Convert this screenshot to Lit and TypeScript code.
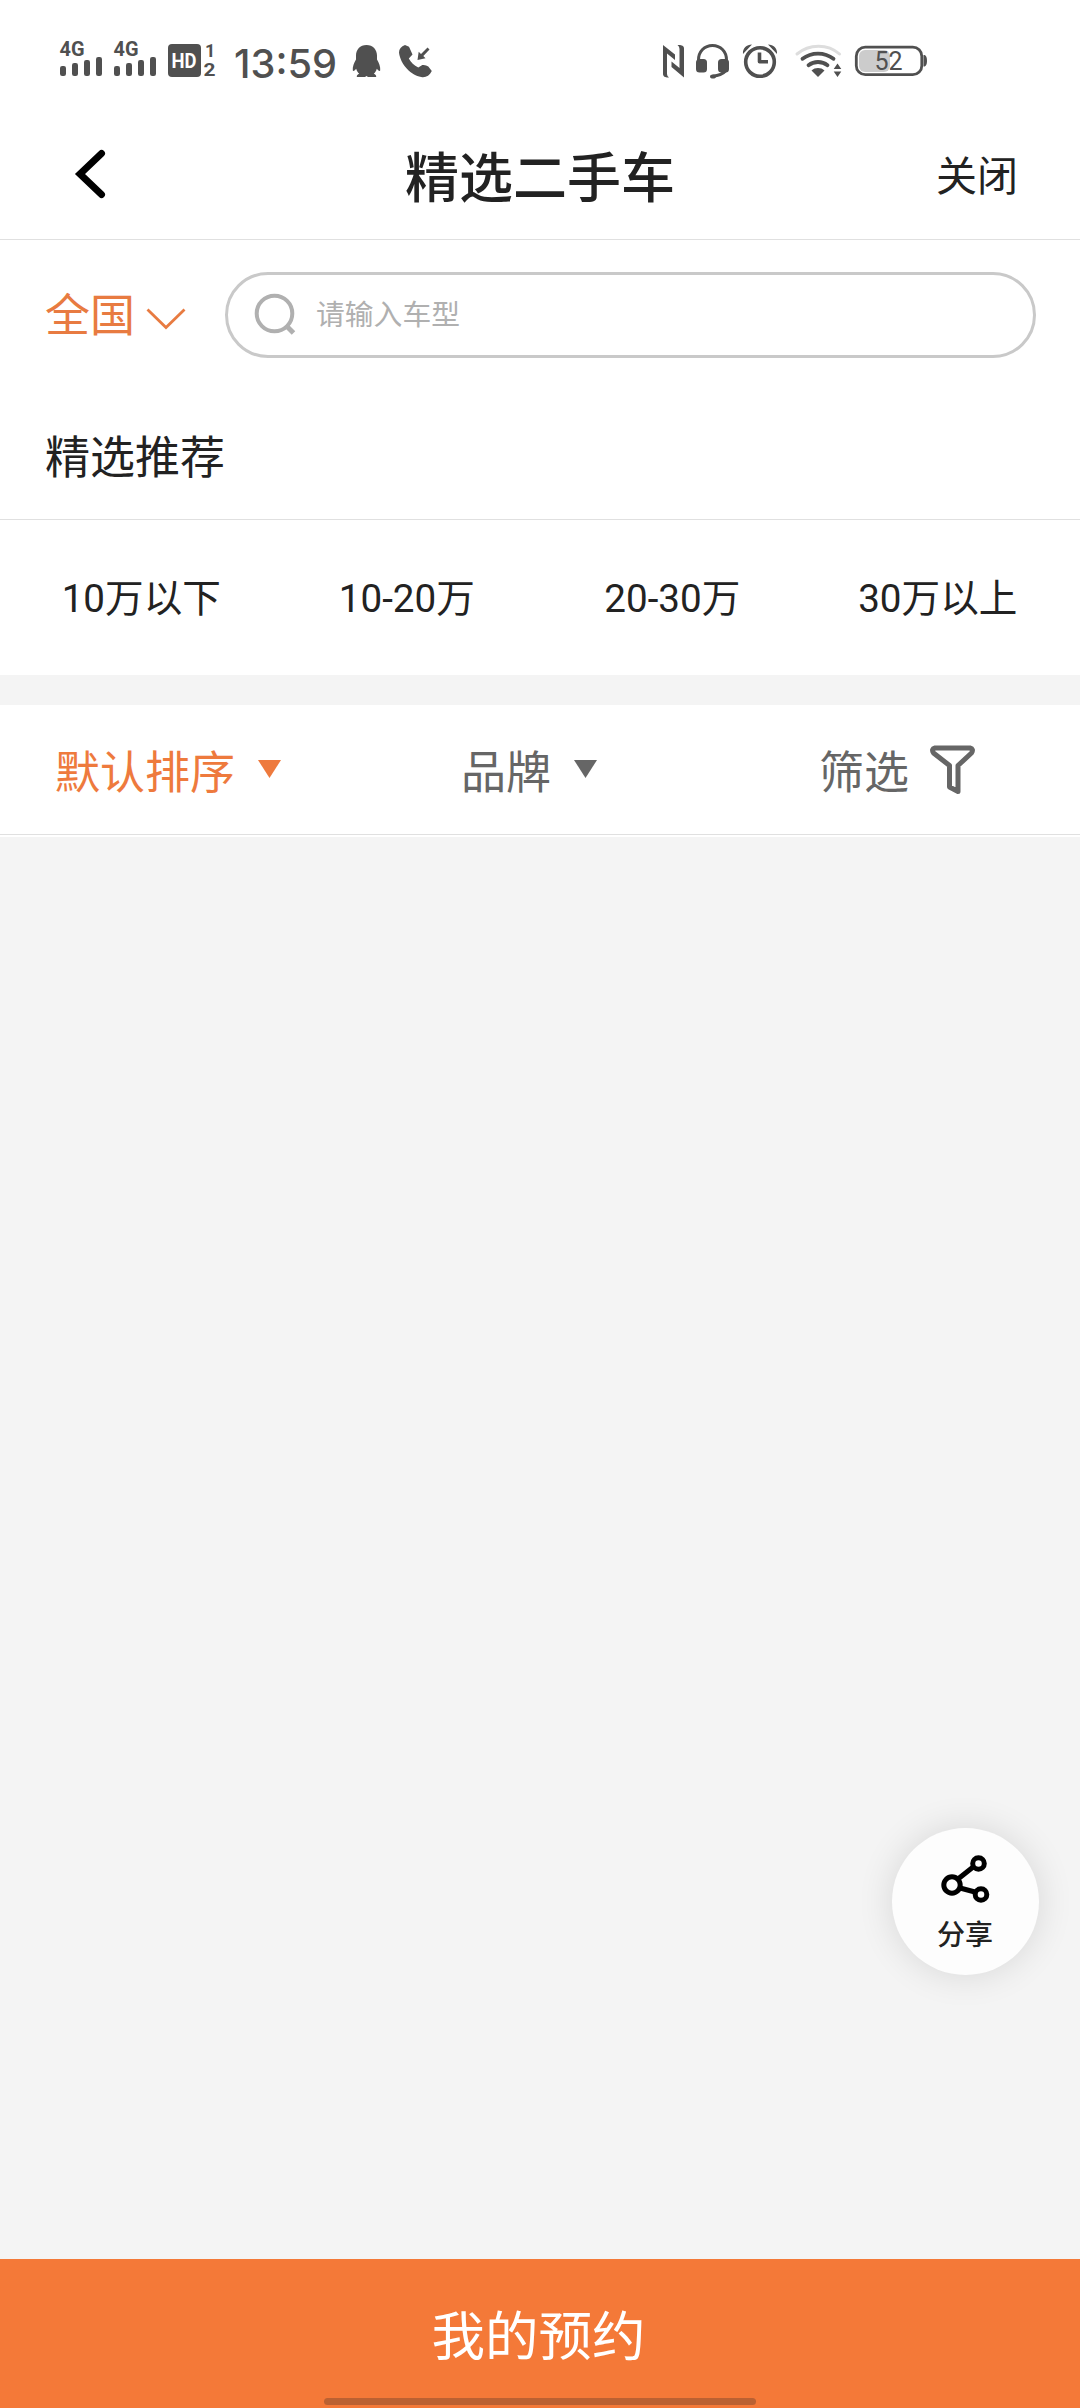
import { LitElement, html, css, svg } from "lit";
import { customElement, property, state } from "lit/decorators.js";
import { classMap } from "lit/directives/class-map.js";

const FONT = css`Roboto, "Noto Sans CJK SC", sans-serif`;

@customElement("status-bar")
class StatusBar extends LitElement {
  static styles = css`
    :host { display: flex; justify-content: space-between; height: 120px; box-sizing: border-box; padding: 20px 130px 0 40px; }
    svg { display: block; flex: none; }
    .ink { fill: #505050; }
    .line { fill: none; stroke: #505050; }
    .net { font: 700 21px Roboto, sans-serif; }
    .num { font: 700 18px Roboto, sans-serif; }
    .hd { font: 700 21px Roboto, sans-serif; fill: #fff; }
    .clock { font: 500 40px Inter, sans-serif; }
    .level { font: 400 25px Roboto, sans-serif; }
  `;

  private signal(x: number) {
    return svg`
      <text class="ink net" x=${x - 0.5} y="36" textLength="25" lengthAdjust="spacingAndGlyphs">4G</text>
      ${[10, 13, 16, 19].map((h, i) => svg`<rect class="ink" x=${x + i * 12} y=${56 - h} width="6" height=${h} rx="2.2"/>`)}`;
  }

  render() {
    return html`
      <svg width="410" height="80" viewBox="0 0 410 80">
        ${this.signal(20)}${this.signal(74)}
        <rect class="ink" x="128" y="24" width="33" height="33" rx="4"/>
        <text class="hd" x="131.500" y="48" textLength="25" lengthAdjust="spacingAndGlyphs">HD</text>
        <text class="ink num" x="165" y="37">1</text>
        <text class="ink num" x="163.500" y="56" textLength="12" lengthAdjust="spacingAndGlyphs">2</text>
        <text class="ink clock" x="194" y="57.500" textLength="103" lengthAdjust="spacingAndGlyphs">13:59</text>
        <path class="ink" d="M326.500 25c-6.500 0-10.500 4.700-10.500 10.500v4c-1.800 3-3.700 7.500-3.200 11 .6 1.200 2.200-.2 3.400-1.800.5 2 1.600 3.700 3 5-1.500.5-2.600 1.500-2.400 3.200h8.200l1.500-.8 1.500.8h8.200c.2-1.700-.9-2.700-2.400-3.200 1.400-1.300 2.500-3 3-5 1.200 1.600 2.800 3 3.400 1.800.5-3.500-1.400-8-3.200-11v-4c0-5.800-4-10.500-10.500-10.500z"/>
        <path class="ink" d="M365 25l4 1.800 3.500 7.700-3.700 4c2.200 4 5.200 7 9.500 9l4-2.500q3.500-.5 6 1.500l3.500 4.500c-2.200 4.500-5.500 6.500-9.500 6.200-11-1.200-22-13-23.300-24.700 0-3.500 2.200-6 6-7.500z"/>
        <path class="ink" d="M387.500 27.500l2 2-6.200 6.600 2.200 2.100-8 1.800 1.200-8.200 2.300 2.200z"/>
      </svg>
      <svg width="310" height="80" viewBox="0 0 310 80">
        <path class="ink" d="M23 25l12 9.500v5.500l-8-6.500V54q0 2 2 3.500c-3 .3-6-.7-6-3.500zM44 57.500L31.500 47v-5.500l8 6.500V29q0-2.500-2-4c3-.3 6.500 0 6.500 3.500z"/>
        <path class="line" stroke-width="3" d="M58.500 42v-2c0-8.500 6-14.500 14-14.500s14 6 14 14.500v2M86.500 50c-3 3.500-7.500 5.700-14 6.300"/>
        <rect class="ink" x="56" y="39" width="11" height="13.500" rx="3.500"/><rect class="ink" x="78" y="39" width="11" height="13.500" rx="3.500"/>
        <ellipse class="ink" cx="73" cy="56.500" rx="3" ry="2"/>
        <circle class="line" cx="120" cy="42" r="14.300" stroke-width="3.600"/>
        <path class="line" stroke-width="3.600" stroke-linejoin="round" d="M119.500 32.500v9.300h8.500"/>
        <path class="ink" d="M103 34c-.5-5 3-9.500 9-9.500zM137 34c.5-5-3-9.500-9-9.500z"/>
        <path class="line" stroke-width="3.800" stroke-linecap="round" d="M162.500 38.800c9-7 22-7 31 0M168.500 45.200c5.500-4.300 13.500-4.300 19 0"/>
        <path fill="none" stroke="#ddd" stroke-width="3" stroke-linecap="round" d="M157 34c12-10.500 31-10.500 42.500 0"/>
        <path class="ink" d="M178 57l-6.500-6.500c3.500-3.300 9.500-3.300 13 0z"/>
        <path class="ink" d="M197.500 43.500l3.800 5.500h-7.600zM197.500 57l3.800-5.500h-7.600z"/>
        <rect x="219" y="30" width="31" height="22" rx="6" fill="#ccc"/>
        <rect class="line" x="216.300" y="27.200" width="65.500" height="27.500" rx="9" stroke-width="2.800"/>
        <path class="ink" d="M283.500 35h1.200q2.300 1 2.300 5.800t-2.300 5.800h-1.200z"/>
        <text class="ink level" x="234.500" y="50" textLength="28">52</text>
      </svg>`;
  }
}

@customElement("nav-header")
class NavHeader extends LitElement {
  @property() heading = "";
  static styles = css`
    :host { display: grid; grid-template-columns: 200px 1fr 200px; align-items: center; height: 120px; box-sizing: border-box; border-bottom: 1px solid #e0e0e0; color: #222; font-family: ${FONT}; }
    .back { margin: -11px 0 0 70px; display: block; }
    .title { text-align: center; font-size: 54px; font-weight: 500; line-height: 80px; }
    .close { text-align: right; padding: 0 62px 5px 0; font-size: 41px; line-height: 60px; white-space: nowrap; }
  `;
  render() {
    return html`
      <svg class="back" width="40" height="54" viewBox="0 0 40 54"><path d="M31.500 6.500L10 27l21.500 20.500" fill="none" stroke="#000" stroke-width="7" stroke-linecap="round" stroke-linejoin="miter"/></svg>
      <div class="title">${this.heading}</div>
      <div class="close">关闭</div>`;
  }
}

@customElement("search-row")
class SearchRow extends LitElement {
  static styles = css`
    :host { display: flex; align-items: center; height: 150px; box-sizing: border-box; padding: 0 45px; font-family: ${FONT}; }
    .region { display: flex; align-items: center; width: 180px; color: #e87b41; font-size: 45px; line-height: 64px; padding-top: 4px; }
    .arrow { margin: 3px 0 0 11px; }
    .field { display: flex; align-items: center; flex: 1; height: 86px; margin-right: -1px; box-sizing: border-box; border: 3px solid #c9c9c9; border-radius: 43px; padding-left: 25px; color: #b0b0b0; font-size: 28.8px; }
    .hint { margin-left: 19px; line-height: 40px; }
  `;
  render() {
    return html`
      <div class="region"><span>全国</span><svg class="arrow" width="40" height="24" viewBox="0 0 40 24"><path d="M1.500 2.500L20 20.500 38.500 2.500" fill="none" stroke="#e87b41" stroke-width="2.800"/></svg></div>
      <div class="field">
        <svg width="44" height="44" viewBox="0 0 44 44" fill="none" stroke="#b0b0b0"><circle cx="21.500" cy="20.500" r="17.800" stroke-width="4"/><path d="M33.500 33l7 7" stroke-width="5"/></svg>
        <span class="hint">请输入车型</span>
      </div>`;
  }
}

@customElement("price-section")
class PriceSection extends LitElement {
  static styles = css`
    :host { display: block; font-family: ${FONT}; color: #222; }
    .heading { height: 130px; box-sizing: border-box; padding: 37px 45px 0; font-size: 45px; line-height: 64px; border-bottom: 1px solid #e0e0e0; }
    .ranges { display: grid; grid-template-columns: repeat(4, 265.500px); justify-content: center; height: 155px; box-sizing: border-box; padding: 3px 1px 0 0; align-items: center; text-align: center; font-size: 38.600px; }
    .range { line-height: 56px; }
  `;
  render() {
    return html`
      <div class="heading">精选推荐</div>
      <div class="ranges">${["10万以下", "10-20万", "20-30万", "30万以上"].map(r => html`<span class="range">${r}</span>`)}</div>`;
  }
}

@customElement("sort-bar")
class SortBar extends LitElement {
  @state() private active = "sort";
  static styles = css`
    :host { display: flex; height: 130px; box-sizing: border-box; margin: 30px 0 2px; background: #fff; border-bottom: 1px solid #e0e0e0; box-shadow: 0 2px #fff; color: #666; font: 45px/64px ${FONT}; }
    .item { display: flex; align-items: center; padding-top: 8px; flex: none; }
    .active { color: #ee7a3d; }
    .sort { width: 461px; padding-left: 55px; box-sizing: border-box; }
    .brand { width: 358px; }
    .tri { margin: -9px 0 0 23px; }
    .funnel { margin: -8px 0 0 20px; }
  `;
  private triangle = html`<svg class="tri" width="23" height="18" viewBox="0 0 23 18"><path d="M0 0h23L11.500 18z" fill="currentColor"/></svg>`;
  private item(id: string, label: string, icon: unknown) {
    return html`<div class=${classMap({ item: true, [id]: true, active: this.active === id })} @click=${() => (this.active = id)}>${label}${icon}</div>`;
  }
  render() {
    return html`
      ${this.item("sort", "默认排序", this.triangle)}
      ${this.item("brand", "品牌", this.triangle)}
      ${this.item("filter", "筛选", html`<svg class="funnel" width="50" height="54" viewBox="0 0 50 54"><path d="M6 5h35q4 1 1.500 5L29 22.500V48.500L20.500 44V22.500L4.500 10q-2.500-4 1.500-5z" fill="none" stroke="#666" stroke-width="5" stroke-linejoin="round"/></svg>`)}`;
  }
}

@customElement("app-root")
class AppRoot extends LitElement {
  static styles = css`
    :host { display: flex; flex-direction: column; position: relative; width: 1080px; height: 2408px; overflow: hidden; background: #f4f4f4; font-family: ${FONT}; }
    .top { background: #fff; }
    .list { flex: 1; }
    .share { position: absolute; left: 891.500px; top: 1828px; width: 147px; height: 147px; border-radius: 50%; background: #fdfdfd; box-shadow: 0 0 36px rgba(0, 0, 0, .12); display: flex; flex-direction: column; align-items: center; color: #222; }
    .share-icon { margin-top: 26px; }
    .share-label { font-size: 28px; font-weight: 500; line-height: 40px; margin-top: 12px; }
    .booking { height: 149px; box-sizing: border-box; display: flex; flex-direction: column; align-items: center; justify-content: space-between; padding: 39px 0 3px; background: #f47938; color: #fff; font-size: 53.500px; line-height: 80px; }
    .title { margin-left: -3px; }
    .home { width: 432px; height: 7px; border-radius: 4px; background: #bb6132; }
  `;
  render() {
    return html`
      <div class="top">
        <status-bar></status-bar>
        <nav-header heading="精选二手车"></nav-header>
        <search-row></search-row>
        <price-section></price-section>
      </div>
      <sort-bar></sort-bar>
      <div class="list"></div>
      <div class="share">
        <svg class="share-icon" width="50" height="50" viewBox="0 0 50 50" fill="none" stroke="#000" stroke-width="5"><path d="M18 25L32.500 13.500M20 34l15 4"/><circle cx="12" cy="31" r="8.200"/><circle cx="38.500" cy="9.500" r="5.800"/><circle cx="41" cy="40.500" r="5.800"/></svg>
        <span class="share-label">分享</span>
      </div>
      <div class="booking"><span class="title">我的预约</span><div class="home"></div></div>`;
  }
}
